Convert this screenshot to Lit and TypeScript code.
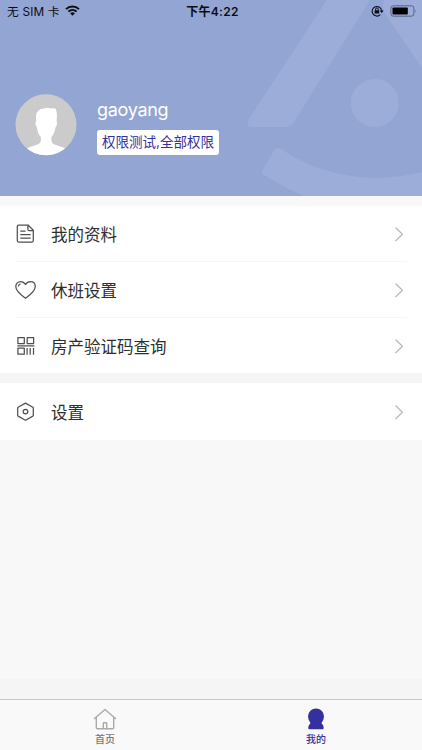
import { LitElement, html, css, svg } from "lit";
import { customElement, property } from "lit/decorators.js";

const icons: Record<string, unknown> = {
  doc: svg`<path d="M3.500 2.200h9.800l5 5v10.600a1.200 1.200 0 0 1-1.200 1.200h-13.600a1.200 1.200 0 0 1-1.200-1.200v-14.400a1.200 1.200 0 0 1 1.200-1.200zM12.900 2.400v4.200a1 1 0 0 0 1 1h4.200M5.300 8.200h5.200M5.300 11.500h10.400M5.300 15h10.400"/>`,
  heart: svg`<path d="M10.500 19.300C8 17.300.8 12.800.8 7.600.8 4.400 3 2.500 5.600 2.500c2 0 3.700.9 4.900 2.900 1.200-2 2.900-2.900 4.900-2.900 2.700 0 4.900 1.900 4.900 5.100 0 5.200-7.300 9.700-9.800 11.700zM3.400 7.600c0-1.500.8-2.500 2.200-2.600"/>`,
  code: svg`<path d="M2.900 2.600h6.400v6H2.900zM12.200 2.600h6.400v6h-6.400zM2.900 13.200h6.400v6H2.900zM2.300 10.900h17M12.100 13v6.700M15.200 13v6.700M18.500 13v6.700"/>`,
  hex: svg`<path d="M10.500 2.100l7.400 4.100a1 1 0 0 1 .4.800v7.300a1 1 0 0 1-.4.800l-7.400 4.100-7.400-4.100a1 1 0 0 1-.4-.8V7a1 1 0 0 1 .4-.8z"/><circle cx="10.500" cy="10.600" r="2.300"/>`,
};

@customElement("menu-row")
export class MenuRow extends LitElement {
  @property() icon = "doc";
  @property() label = "";
  static styles = css`
    :host { display: flex; align-items: center; height: 56px; padding: 0 15px; box-sizing: border-box; background: #fff; }
    .icon { width: 21px; height: 21px; fill: none; stroke: #505050; stroke-width: 1.25; stroke-linejoin: round; }
    .label { flex: 1; margin-left: 15px; padding-top: 2px; font-size: 16.5px; line-height: 24px; color: #2e2e2e; }
    .arrow { width: 10px; height: 16px; margin-right: 3px; fill: none; stroke: #b8b8b8; stroke-width: 1.3; }
  `;
  render() {
    return html`<svg class="icon" viewBox="0 0 21 21">${icons[this.icon]}</svg>
      <span class="label">${this.label}</span>
      <svg class="arrow" viewBox="0 0 10 16"><path d="M1.500 1.500L8.400 8.300l-6.900 6.800"/></svg>`;
  }
}

@customElement("app-root")
export class AppRoot extends LitElement {
  static styles = css`
    :host { display: flex; flex-direction: column; height: 750px; width: 422px; overflow: hidden; background: #f8f8f8;
      font-family: Inter, "Noto Sans CJK SC", sans-serif; }
    .header { position: relative; height: 195.600px; flex: none; background: #93a5d3; display: flex; flex-direction: column; }
    .art { position: absolute; inset: 0; width: 422px; height: 195.600px; fill: #9dadd9; }
    .status { position: relative; display: grid; grid-template-columns: 1fr auto 1fr; align-items: center; height: 21px; padding: 0 5px 0 7px; font-size: 12px; color: #0b0d14; }
    .left, .right { display: flex; align-items: center; }
    .left { font-size: 11.800px; letter-spacing: .15px; }
    .wifi { width: 15px; height: 11px; margin-left: 5px; }
    .time { padding-left: 1px; font-weight: 600; letter-spacing: .3px; font-size: 12px; }
    .right { justify-content: flex-end; gap: 6px; }
    .lock { width: 13px; height: 12px; }
    .battery { width: 27px; height: 12px; }
    .profile { position: relative; display: flex; padding: 73px 0 0 15px; }
    .avatar { width: 62px; height: 62px; }
    .who { margin-left: 20px; display: flex; flex-direction: column; align-items: flex-start; }
    .name { font-size: 18px; letter-spacing: -.3px; line-height: 24px; margin-top: 4px; color: #fff; font-weight: 400; }
    .tag { margin-top: 8px; width: 122px; height: 25px; border-radius: 3px; background: #fff; color: #3430a0; font-size: 13.500px; line-height: 25px; text-align: center; white-space: nowrap; }
    .first { height: 167px; overflow: hidden; background: #fff; border-top: 10.400px solid #f8f8f8; }
    .second { margin-top: 10px; height: 57px; padding-top: 1px; box-sizing: border-box; background: #fff; }
    .line { height: 1px; margin: -1px 15px 0 16px; background: #f6f6f6; position: relative; }
    .lists { background: #f5f5f5; flex: none; }
    .space { flex: 1; }
    .strip { height: 20px; background: #f5f5f5; }
    .tabs { height: 51px; box-sizing: border-box; border-top: 1px solid #c9c9cb; background: #f9f9f9; display: grid; grid-template-columns: 1fr 1fr; flex: none; }
    .tab { display: flex; flex-direction: column; align-items: center; padding: 7px 1px 0 0; font-size: 10px; line-height: 14px; color: #777; font-weight: 500; }
    .tab.on { color: #3430a0; }
    .tab svg { width: 24px; height: 24px; margin-bottom: 1px; }
  `;
  render() {
    return html`
      <div class="header">
        <svg class="art" viewBox="0 0 422 195.600" preserveAspectRatio="none">
          <path d="M327 0H370L294 122Q291 127 285 127H252Q246 127 248 120z"/>
          <path d="M384 12Q382 8 384 0H422V68z"/>
          <circle cx="374.700" cy="103" r="24"/>
          <path d="M275 149Q278 147 281 149C324 178 376 184 422 172V196H304Q283 187 264 175Q261 173 263 169z"/>
        </svg>
        <div class="status">
          <div class="left"><span>无 SIM 卡</span>
            <svg class="wifi" viewBox="0 0 15 11"><g fill="none" stroke="#0b0d14" stroke-width="2"><path d="M1 4.100C4.700.5 10.300.5 14 4.100M3.400 6.600c2.400-2.300 5.800-2.300 8.200 0"/></g><path d="M5.100 8.200c1.500-1.300 3.300-1.300 4.800 0L7.500 10.700z" fill="#0b0d14"/></svg>
          </div>
          <span class="time">下午4:22</span>
          <div class="right">
            <svg class="lock" viewBox="0 0 13 12"><path d="M9.300 9.700A4.800 4.800 0 1 1 10.700 5.700" fill="none" stroke="#0b0d14" stroke-width="1.100"/><path d="M8.700 5.500h4l-2 2.500zM3.600 5.300h4.600v3.200H3.600z" fill="#0b0d14"/><path d="M4.600 5.500V4.200a1.300 1.300 0 0 1 2.600 0v1.300" fill="none" stroke="#0b0d14"/></svg>
            <svg class="battery" viewBox="0 0 27 12"><rect x=".9" y=".8" width="23" height="10.400" rx="2.500" fill="none" stroke="#59647f"/><rect x="2.500" y="2.400" width="15.300" height="7.200" rx=".8" fill="#000"/><path d="M25.300 4.300q1.300 1.700 0 3.400z" fill="#59647f"/></svg>
          </div>
        </div>
        <div class="profile">
          <svg class="avatar" viewBox="0 0 62 62">
            <defs><clipPath id="disc"><circle cx="31" cy="30.700" r="30.500"/></clipPath></defs>
            <g clip-path="url(#disc)"><path fill="#cbcbcb" d="M0 0h62v62H0z"/>
            <path fill="#fff" d="M21.200 27C20 19 23 14.500 29 14.400c3-.6 6-.6 8 .2 1.500-.5 2.800-.4 3.700.2 1.300 3 1.400 7 .9 12.200.9 1.500.5 4.500-1 6-.6 4.500-2 7.500-4 9.800-.4 2-.3 4.200.5 5.700C39.500 52 47 52 54 56v8H8v-8c7-4 14.500-4 17.200-7.500.8-1.500.9-3.700.5-5.700-2.200-2.300-3.300-5.300-3.900-9.800-1.500-1.500-1.700-4.500-.6-6z"/></g>
          </svg>
          <div class="who"><div class="name">gaoyang</div><div class="tag">权限测试,全部权限</div></div>
        </div>
      </div>
      <div class="lists">
        <div class="first">
          <menu-row icon="doc" label="我的资料"></menu-row><div class="line"></div>
          <menu-row icon="heart" label="休班设置"></menu-row><div class="line"></div>
          <menu-row icon="code" label="房产验证码查询"></menu-row>
        </div>
        <div class="second"><menu-row icon="hex" label="设置"></menu-row></div>
      </div>
      <div class="space"></div>
      <div class="strip"></div>
      <div class="tabs">
        <div class="tab"><svg viewBox="0 0 24 24" fill="none" stroke="#aaa" stroke-width="1.400" stroke-linejoin="round" stroke-linecap="round"><path d="M1.500 11.500L12 2.500l10.500 9M3.300 10.200v10.300a1.200 1.200 0 0 0 1.200 1.200h15a1.200 1.200 0 0 0 1.200-1.200V10.200M10.300 21.500v-5a.7.7 0 0 1 .7-.7h2a.7.700 0 0 1 .7.700v5"/></svg><span>首页</span></div>
        <div class="tab on"><svg viewBox="0 0 24 24" fill="#3430a0"><circle cx="12" cy="9.500" r="8"/><path d="M5.500 14h13c-1.100 1.300-1.300 2.300-.2 3.300 1.400 1.300 2 4.900.6 4.900H5.100c-1.400 0-.8-3.600.6-4.900 1.100-1 .9-2-.2-3.300z"/></svg><span>我的</span></div>
      </div>`;
  }
}
